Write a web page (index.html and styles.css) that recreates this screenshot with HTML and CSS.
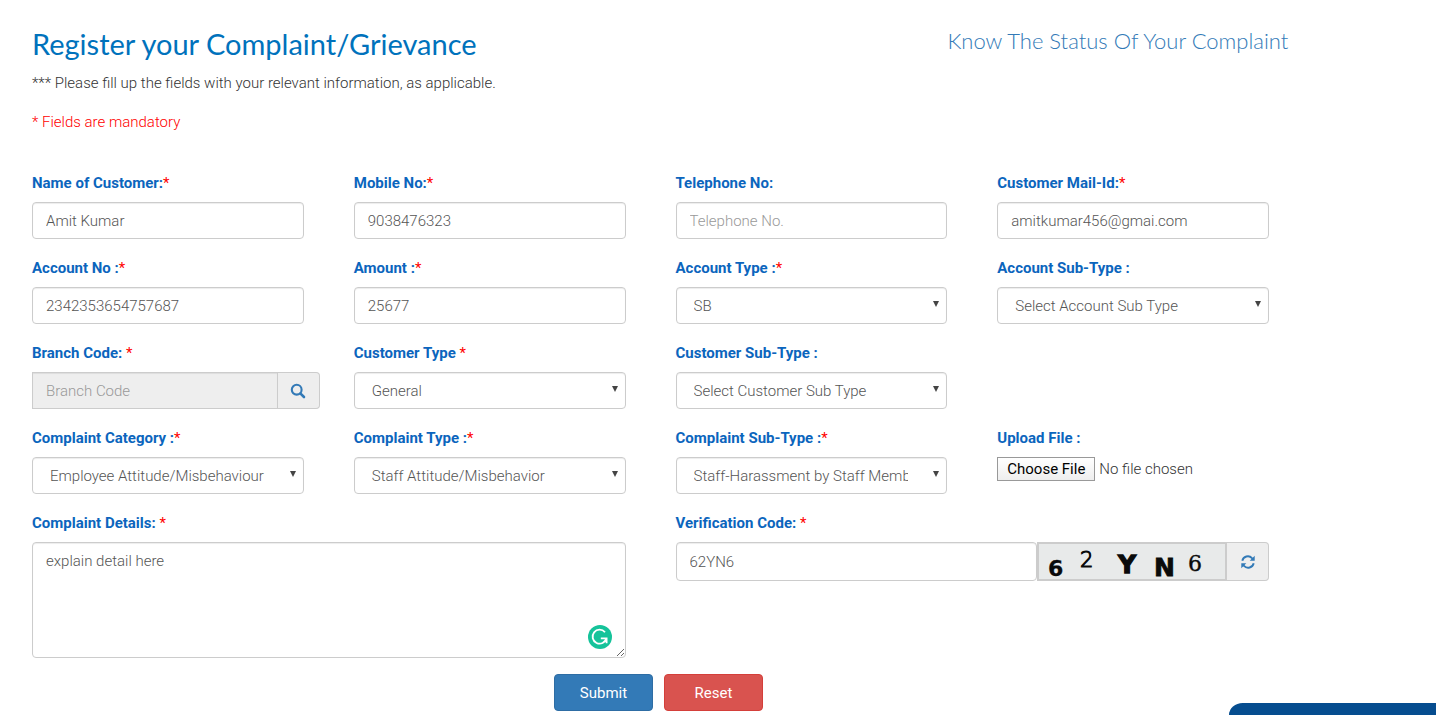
FILE: index.html
```html
<!DOCTYPE html>
<html lang="en">
<head>
<meta charset="utf-8">
<title>Register your Complaint/Grievance</title>
<link rel="stylesheet" href="styles.css">
</head>
<body>
<main class="page">
  <header class="page-header">
    <h1 class="page-title">Register your Complaint/Grievance</h1>
    <a class="status-link" href="#">Know The Status Of Your Complaint</a>
  </header>
  <p class="note">*** Please fill up the fields with your relevant information, as applicable.</p>
  <p class="note note-required">* Fields are mandatory</p>

  <form class="complaint-form">
    <div class="grid">
      <div class="field">
        <label for="name">Name of Customer:<span class="req">*</span></label>
        <input class="control" id="name" type="text" value="Amit Kumar">
      </div>
      <div class="field">
        <label for="mobile">Mobile No:<span class="req">*</span></label>
        <input class="control" id="mobile" type="text" value="9038476323">
      </div>
      <div class="field">
        <label for="phone">Telephone No:</label>
        <input class="control" id="phone" type="text" placeholder="Telephone No.">
      </div>
      <div class="field">
        <label for="mail">Customer Mail-Id:<span class="req">*</span></label>
        <input class="control" id="mail" type="text" value="amitkumar456@gmai.com">
      </div>

      <div class="field">
        <label for="account">Account No :<span class="req">*</span></label>
        <input class="control" id="account" type="text" value="2342353654757687">
      </div>
      <div class="field">
        <label for="amount">Amount :<span class="req">*</span></label>
        <input class="control" id="amount" type="text" value="25677">
      </div>
      <div class="field">
        <label for="account-type">Account Type :<span class="req">*</span></label>
        <div class="select-wrap"><select class="control" id="account-type"><option>SB</option></select></div>
      </div>
      <div class="field">
        <label for="account-sub">Account Sub-Type :</label>
        <div class="select-wrap"><select class="control" id="account-sub"><option>Select Account Sub Type</option></select></div>
      </div>

      <div class="field">
        <label for="branch">Branch Code: <span class="req">*</span></label>
        <div class="input-group branch-group">
          <input class="control" id="branch" type="text" placeholder="Branch Code" disabled>
          <button class="addon" type="button" aria-label="Search branch">
            <svg width="16" height="16" viewBox="0 0 16 16" fill="none" stroke="currentColor"><circle cx="6.7" cy="6.7" r="4.9" stroke-width="2.1"/><path d="M10.3 10.3 14 14" stroke-width="2.6" stroke-linecap="round"/></svg>
          </button>
        </div>
      </div>
      <div class="field">
        <label for="customer-type">Customer Type <span class="req">*</span></label>
        <div class="select-wrap"><select class="control" id="customer-type"><option>General</option></select></div>
      </div>
      <div class="field field-row-end">
        <label for="customer-sub">Customer Sub-Type :</label>
        <div class="select-wrap"><select class="control" id="customer-sub"><option>Select Customer Sub Type</option></select></div>
      </div>

      <div class="field field-row-start">
        <label for="category">Complaint Category :<span class="req">*</span></label>
        <div class="select-wrap"><select class="control" id="category"><option>Employee Attitude/Misbehaviour</option></select></div>
      </div>
      <div class="field">
        <label for="complaint-type">Complaint Type :<span class="req">*</span></label>
        <div class="select-wrap"><select class="control" id="complaint-type"><option>Staff Attitude/Misbehavior</option></select></div>
      </div>
      <div class="field">
        <label for="complaint-sub">Complaint Sub-Type :<span class="req">*</span></label>
        <div class="select-wrap"><select class="control" id="complaint-sub"><option>Staff-Harassment by Staff Member</option></select></div>
      </div>
      <div class="field">
        <label for="upload">Upload File :</label>
        <input class="file" id="upload" type="file">
      </div>

      <div class="field field-wide">
        <label for="details">Complaint Details: <span class="req">*</span></label>
        <div class="details-wrap">
          <textarea class="control details" id="details">explain detail here</textarea>
          <svg class="checker" width="24" height="24" viewBox="0 0 24 24" fill="none"><circle cx="12" cy="12" r="12" fill="#15c39a"/><path d="M17 7.2A7 7 0 1 0 18.4 13.3M12.8 13.3H18.6V18.2" stroke="#fff" stroke-width="1.8"/></svg>
        </div>
      </div>
      <div class="field field-wide">
        <label for="code">Verification Code: <span class="req">*</span></label>
        <div class="input-group code-group">
          <input class="control" id="code" type="text" value="62YN6">
          <svg class="captcha" viewBox="0 0 190 39" role="img" aria-label="Verification characters">
            <rect x="1" y="1" width="188" height="37" fill="#e8eaea" stroke="#ccc" stroke-width="2"/>
            <g fill="#0a0a0a" stroke="#0a0a0a" font-family="DejaVu Sans">
              <text x="11" y="34" font-size="22" font-weight="bold" stroke-width="0.3">6</text>
              <text x="43" y="25" font-size="21" stroke-width="1.1">2</text>
              <text x="81" y="31" font-size="25" font-weight="bold" stroke-width="1.3">Y</text>
              <text x="117" y="34" font-size="25" font-weight="bold" stroke-width="0.8">N</text>
              <text x="151" y="29" font-size="22" font-family="DejaVu Serif" stroke-width="0.4">6</text>
            </g>
          </svg>
          <button class="addon" type="button" aria-label="Refresh code">
            <svg width="14" height="14" viewBox="0 0 14 14" fill="none" stroke="currentColor" stroke-width="1.9"><path d="M1.3 5.8A5.7 5.7 0 0 1 11 3.1l1.2 1.2M12.7 8.2A5.7 5.7 0 0 1 3 10.9L1.8 9.7"/><path d="M13.7.7v5H8.7zM.3 13.3v-5h5z" fill="currentColor" stroke="none"/></svg>
          </button>
        </div>
      </div>
    </div>
    <div class="actions">
      <button class="btn btn-submit" type="submit">Submit</button>
      <button class="btn btn-reset" type="reset">Reset</button>
    </div>
  </form>
</main>
<div class="chat-tab"></div>
</body>
</html>
```
FILE: styles.css
```css
* { box-sizing: border-box; }

body {
  margin: 0;
  overflow: hidden;
  background: #fff;
  color: #333;
  font: 300 15px/20px Roboto, "Liberation Sans", sans-serif;
}

.page { padding: 24px 167px 0 32px; }

.page-header {
  display: grid;
  grid-template-columns: minmax(0, 74fr) minmax(0, 26fr);
  align-items: start;
}

.page-title {
  margin: 0;
  color: #0072bc;
  font: 400 29px/40px "Century Gothic", Lato, sans-serif;
}

.status-link {
  color: #337ab7;
  font: 300 22px/34px "Century Gothic", Lato, sans-serif;
  text-decoration: none;
  white-space: nowrap;
}

.note { margin: 9px 0 19px; }
.note-required { margin: 0 0 41px; color: #f00; }

.grid {
  display: grid;
  grid-template-columns: repeat(4, minmax(0, 1fr));
  gap: 19px 50px;
}

.field { display: flex; flex-direction: column; gap: 9px; }
.field-wide { grid-column: span 2; }
.field-row-end { grid-column: 3; }
.field-row-start { grid-column: 1; }

label { color: #0b65bd; font-weight: 700; }
.req { color: #f00; font-weight: 400; }

.control {
  display: block;
  width: 100%;
  height: 37px;
  padding: 6px 13px;
  border: 1px solid #ccc;
  border-radius: 4px;
  background: #fff;
  box-shadow: inset 0 1px 1px rgba(0, 0, 0, .075);
  color: #555;
  font: inherit;
}

.control::placeholder { color: #999; opacity: 1; }
.control:disabled { background: #eee; }

.select-wrap { position: relative; }
.select-wrap .control { appearance: none; padding: 6px 38px 6px 17px; }
.select-wrap::after {
  content: "";
  position: absolute;
  top: 14px;
  right: 8px;
  border: solid transparent;
  border-width: 6px 3px 0;
  border-top-color: #444;
  pointer-events: none;
}

.input-group { display: flex; }
.input-group .control { flex: 1; min-width: 0; }
.branch-group { margin-right: -16px; }
.branch-group .control { border-radius: 0; }
.code-group .control, .code-group .addon { height: 39px; }

.addon {
  display: flex;
  align-items: center;
  justify-content: center;
  width: 42px;
  height: 37px;
  padding: 0;
  border: 1px solid #ccc;
  border-left: 0;
  border-radius: 0 4px 4px 0;
  background: #eee;
  color: #337ab7;
}

.captcha { width: 190px; height: 39px; }

.file { width: 100%; height: 24px; color: #333; font: inherit; line-height: 24px; }
.file::file-selector-button {
  height: 24px;
  margin: 0 4px 0 0;
  padding: 0 9px;
  border: 1px solid #999;
  border-radius: 0;
  background: linear-gradient(#fff, #eee);
  color: #000;
  font: 400 15px/20px Roboto, sans-serif;
}

.details-wrap { position: relative; }
.details { height: 116px; padding: 8px 13px; resize: vertical; }
.checker { position: absolute; right: 14px; bottom: 9px; }

.actions {
  display: flex;
  justify-content: center;
  gap: 11px;
  padding: 16px 0 4px 16px;
}

.btn {
  width: 99px;
  height: 37px;
  border: 1px solid #2e6da4;
  border-radius: 4px;
  background: #337ab7;
  color: #fff;
  font: 400 15px/20px Roboto, sans-serif;
}
.btn-reset { border-color: #d43f3a; background: #d9534f; }

.chat-tab {
  position: fixed;
  right: 0;
  bottom: 0;
  width: 207px;
  height: 12px;
  border-top-left-radius: 16px 14px;
  background: #064d8f;
}
```
